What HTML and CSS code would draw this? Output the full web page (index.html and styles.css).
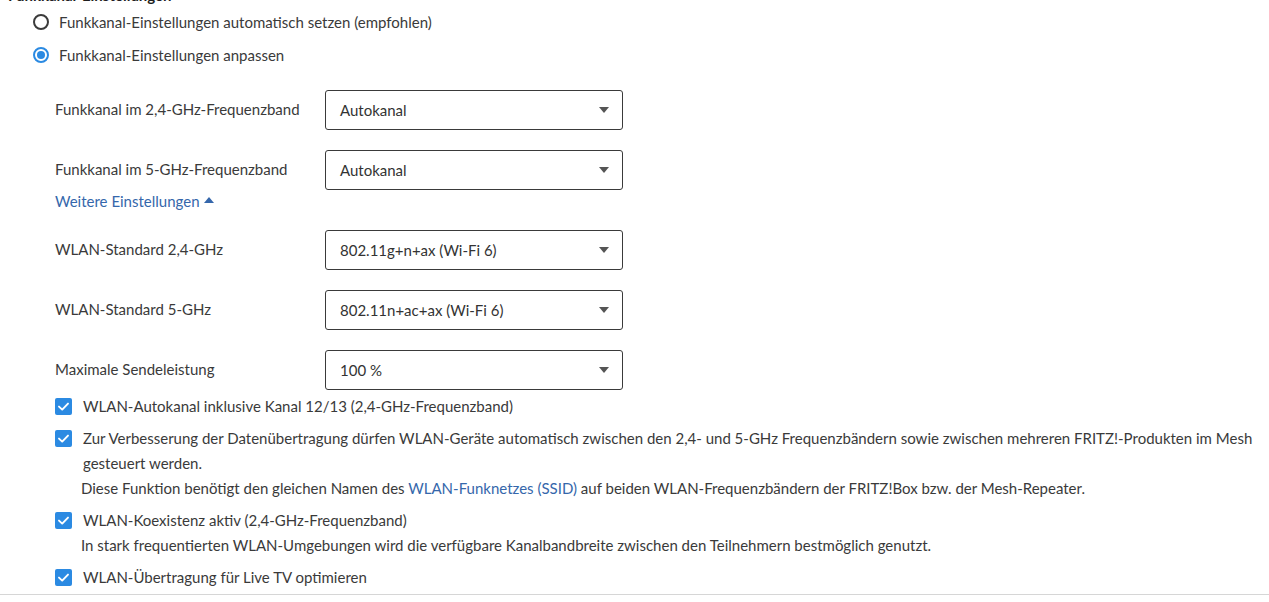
FILE: index.html
```html
<!DOCTYPE html>
<html lang="de">
<head>
<meta charset="utf-8">
<title>Funkkanal-Einstellungen</title>
<link rel="stylesheet" href="styles.css">
</head>
<body>
<div class="page">
  <h3 class="heading">Funkkanal-Einstellungen</h3>
  <div class="radios">
    <label class="radio-row"><span class="radio"></span><span>Funkkanal-Einstellungen automatisch setzen (empfohlen)</span></label>
    <label class="radio-row"><span class="radio checked"></span><span>Funkkanal-Einstellungen anpassen</span></label>
  </div>
  <div class="form">
    <div class="field">
      <div class="field-label">Funkkanal im 2,4-GHz-Frequenzband</div>
      <div class="select"><span>Autokanal</span><span class="arrow"></span></div>
    </div>
    <div class="field">
      <div class="field-label">Funkkanal im 5-GHz-Frequenzband</div>
      <div class="select"><span>Autokanal</span><span class="arrow"></span></div>
    </div>
    <a class="more-link">Weitere Einstellungen <span class="up-arrow"></span></a>
    <div class="field first-extra">
      <div class="field-label">WLAN-Standard 2,4-GHz</div>
      <div class="select"><span>802.11g+n+ax (Wi-Fi 6)</span><span class="arrow"></span></div>
    </div>
    <div class="field">
      <div class="field-label">WLAN-Standard 5-GHz</div>
      <div class="select"><span>802.11n+ac+ax (Wi-Fi 6)</span><span class="arrow"></span></div>
    </div>
    <div class="field">
      <div class="field-label">Maximale Sendeleistung</div>
      <div class="select"><span>100 %</span><span class="arrow"></span></div>
    </div>
    <div class="checks">
      <div class="check-item">
        <span class="checkbox"><svg viewBox="0 0 17 17" width="17" height="17"><path d="M4 8.6 L7.2 11.6 L13 5.6" fill="none" stroke="#fff" stroke-width="1.9" stroke-linecap="round" stroke-linejoin="round"/></svg></span>
        <div class="check-text">WLAN-Autokanal inklusive Kanal 12/13 (2,4-GHz-Frequenzband)</div>
      </div>
      <div class="check-item">
        <span class="checkbox"><svg viewBox="0 0 17 17" width="17" height="17"><path d="M4 8.6 L7.2 11.6 L13 5.6" fill="none" stroke="#fff" stroke-width="1.9" stroke-linecap="round" stroke-linejoin="round"/></svg></span>
        <div class="check-text">Zur Verbesserung der Datenübertragung dürfen WLAN-Geräte automatisch zwischen den 2,4- und 5-GHz Frequenzbändern sowie zwischen mehreren FRITZ!-Produkten im Mesh gesteuert werden.</div>
      </div>
      <div class="note">Diese Funktion benötigt den gleichen Namen des <a class="link">WLAN-Funknetzes (SSID)</a> auf beiden WLAN-Frequenzbändern der FRITZ!Box bzw. der Mesh-Repeater.</div>
      <div class="check-item">
        <span class="checkbox"><svg viewBox="0 0 17 17" width="17" height="17"><path d="M4 8.6 L7.2 11.6 L13 5.6" fill="none" stroke="#fff" stroke-width="1.9" stroke-linecap="round" stroke-linejoin="round"/></svg></span>
        <div class="check-text">WLAN-Koexistenz aktiv (2,4-GHz-Frequenzband)</div>
      </div>
      <div class="note">In stark frequentierten WLAN-Umgebungen wird die verfügbare Kanalbandbreite zwischen den Teilnehmern bestmöglich genutzt.</div>
      <div class="check-item">
        <span class="checkbox"><svg viewBox="0 0 17 17" width="17" height="17"><path d="M4 8.6 L7.2 11.6 L13 5.6" fill="none" stroke="#fff" stroke-width="1.9" stroke-linecap="round" stroke-linejoin="round"/></svg></span>
        <div class="check-text">WLAN-Übertragung für Live TV optimieren</div>
      </div>
    </div>
  </div>
  <div class="divider"></div>
</div>
</body>
</html>
```
FILE: styles.css
```css
html, body {
  margin: 0;
  padding: 0;
  background: #fff;
}
body {
  font-family: Lato, "Open Sans", sans-serif;
  font-size: 15px;
  color: #3a3a3a;
  overflow: hidden;
}
.page {
  width: 1269px;
}
.heading {
  margin: -15px 0 0 8px;
  font-size: 15px;
  font-weight: 700;
  line-height: 20px;
  color: #1e1e1e;
}
.radios {
  padding-left: 33px;
}
.radio-row {
  display: flex;
  align-items: center;
  gap: 10px;
  height: 33px;
}
.radio {
  width: 16px;
  height: 16px;
  box-sizing: border-box;
  border: 2px solid #3b3b3b;
  border-radius: 50%;
  flex: none;
  display: flex;
  align-items: center;
  justify-content: center;
}
.radio.checked {
  border-color: #2b8ae2;
}
.radio.checked::after {
  content: "";
  width: 8px;
  height: 8px;
  border-radius: 50%;
  background: #2b8ae2;
}
.form {
  padding-left: 55px;
  padding-top: 19px;
}
.field {
  display: flex;
  align-items: flex-start;
  height: 40px;
  margin-bottom: 20px;
}
.field-label {
  width: 270px;
  flex: none;
  line-height: 20px;
  padding-top: 9px;
}
.select {
  width: 298px;
  height: 40px;
  box-sizing: border-box;
  border: 1px solid #3a3a3a;
  border-radius: 3px;
  display: flex;
  align-items: center;
  justify-content: space-between;
  padding: 0 13px 0 14px;
  color: #333;
}
.arrow {
  width: 0;
  height: 0;
  border-left: 5.5px solid transparent;
  border-right: 5.5px solid transparent;
  border-top: 6px solid #555;
}
.more-link {
  display: flex;
  width: fit-content;
  align-items: center;
  gap: 4px;
  color: #3567ab;
  line-height: 16px;
  height: 16px;
  margin-top: -17px;
  cursor: pointer;
}
.up-arrow {
  width: 0;
  height: 0;
  border-left: 5px solid transparent;
  border-right: 5px solid transparent;
  border-bottom: 6px solid #3567ab;
  margin-top: -2px;
}
.first-extra {
  margin-top: 21px;
}
.checks {
  margin-top: -19px;
}
.check-item {
  display: flex;
  align-items: flex-start;
  gap: 11px;
  padding: 3px 0 4px;
}
.checkbox {
  width: 17px;
  height: 17px;
  border-radius: 2px;
  background: #2b8ae2;
  flex: none;
  margin-top: 4px;
  display: flex;
}
.check-text {
  line-height: 25px;
}
.note {
  padding-left: 26px;
  line-height: 25px;
  margin-top: -4px;
  padding-bottom: 4px;
}
.link {
  color: #3567ab;
  cursor: pointer;
}
.divider {
  height: 1px;
  background: #d6d6d6;
  margin-top: 0;
}
```
